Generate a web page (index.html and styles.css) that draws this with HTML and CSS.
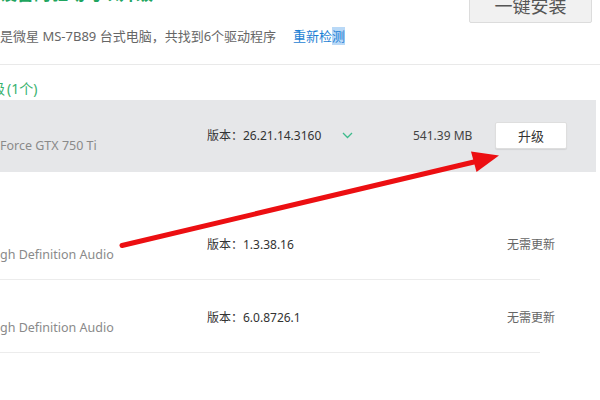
FILE: index.html
```html
<!DOCTYPE html>
<html lang="zh-CN">
<head>
<meta charset="utf-8">
<title>驱动管理</title>
<link rel="stylesheet" href="styles.css">
</head>
<body>
<div class="page">
  <header class="top">
    <div class="summary">
      <h1 class="headline"><span class="cut">检测到有3个</span>设备的驱动可以升级</h1>
      <p class="meta"><span class="cut">您的电脑</span>是微星 MS-7B89 台式电脑，共找到6个驱动程序<a class="recheck" href="#">重新检<span class="picked">测</span></a></p>
    </div>
    <button class="install-all" type="button">一键安装</button>
  </header>

  <section class="group">
    <h2 class="group-title"><span class="cut tail">可升级</span>(1个)</h2>
    <div class="row upgradable">
      <div class="name"><span class="cut">NVIDIA Ge</span>Force GTX 750 Ti</div>
      <div class="version">版本：26.21.14.3160</div>
      <div class="more">
        <svg width="11" height="7" viewBox="0 0 11 7"><polyline points="1,1 5.5,5.5 10,1" fill="none" stroke="#3dbb8c" stroke-width="1.3"/></svg>
      </div>
      <div class="size">541.39 MB</div>
      <div class="action"><button class="upgrade" type="button">升级</button></div>
    </div>
  </section>

  <section class="group latest">
    <div class="row plain">
      <div class="name"><span class="cut">Realtek Hi</span>gh Definition Audio</div>
      <div class="version">版本：1.3.38.16</div>
      <div class="more"></div>
      <div class="size"></div>
      <div class="action status">无需更新</div>
    </div>
    <div class="row plain">
      <div class="name"><span class="cut">NVIDIA Hi</span>gh Definition Audio</div>
      <div class="version">版本：6.0.8726.1</div>
      <div class="more"></div>
      <div class="size"></div>
      <div class="action status">无需更新</div>
    </div>
  </section>

  <!-- red pointer annotation drawn over the list -->
  <svg class="pointer" width="600" height="400" viewBox="0 0 600 400">
    <line x1="122" y1="245.5" x2="476" y2="161.5" stroke="#ec0f12" stroke-width="5" stroke-linecap="round"/>
    <polygon points="499,155.5 471,151.5 476.5,172" fill="#ec0f12"/>
  </svg>
</div>
</body>
</html>
```

FILE: styles.css
```css
html, body {
  margin: 0;
  padding: 0;
  background: #ffffff;
}

body {
  font-family: "Noto Sans", "Noto Sans CJK SC", sans-serif;
  color: #333333;
  overflow: hidden;
}

.page {
  position: relative;
  width: 600px;
  height: 400px;
  overflow: hidden;
}

/* text whose beginning runs off the left edge of the window */
.cut {
  display: inline-block;
  width: 0;
  direction: rtl;
  white-space: nowrap;
}

.cut.tail {
  width: 5px;
  margin-right: 2px;
  overflow: hidden;
  vertical-align: bottom;
}

/* ---------- header ---------- */
.top {
  display: flex;
  justify-content: space-between;
  align-items: flex-start;
  border-bottom: 1px solid #e9e9e9;
  height: 64px;
}

.headline {
  margin: -16px 0 0;
  font-size: 17px;
  line-height: 20px;
  font-weight: bold;
  color: #1fa55f;
  white-space: nowrap;
}

.meta {
  margin: 22px 0 0;
  font-size: 13px;
  line-height: 20px;
  color: #666666;
  white-space: nowrap;
}

.recheck {
  margin-left: 17px;
  color: #1d7fd4;
  text-decoration: none;
}

.picked {
  background: #b9d9f7;
}

.install-all {
  margin: -14px 8px 0 0;
  width: 123px;
  height: 37px;
  padding: 0;
  border: 1px solid #dcdcdc;
  border-radius: 2px;
  background: #f1f1f1;
  font-family: inherit;
  font-size: 18px;
  color: #555555;
}

/* ---------- driver groups ---------- */
.group-title {
  margin: 14px 0 0;
  font-size: 14px;
  line-height: 20px;
  font-weight: normal;
  color: #38b26e;
  white-space: nowrap;
}

.row {
  display: grid;
  grid-template-columns: 207px 135px 71px 82px 72px;
  align-items: start;
  box-sizing: border-box;
  font-size: 12px;
  line-height: 18px;
  white-space: nowrap;
}

.row.upgradable {
  margin-top: 1px;
  height: 72px;
  padding-top: 22px;
  margin-right: 4px;
  background: #e6e7e9;
}

.row.plain {
  height: 73px;
  padding-top: 25px;
  margin-right: 60px;
  border-bottom: 1px solid #ececec;
}

.group.latest {
  margin-top: 35px;
}

.name {
  color: #8a8a8a;
  margin-top: 15px;
  font-size: 12.5px;
}

.row.plain .name {
  margin-top: 14px;
}

.version,
.size {
  margin-top: 5px;
  color: #333333;
}

.row.plain .version {
  margin-top: 4px;
}

.more {
  padding-top: 10px;
  line-height: 0;
}

.size {
  color: #444444;
}

.upgrade {
  width: 72px;
  height: 27px;
  padding: 0;
  border: 1px solid #dedede;
  border-radius: 2px;
  background: #ffffff;
  box-shadow: 0 1px 1px rgba(0, 0, 0, 0.08);
  font-family: inherit;
  font-size: 13px;
  color: #333333;
}

.status {
  margin-top: 4px;
  text-align: center;
  color: #666666;
}

.pointer {
  position: absolute;
  left: 0;
  top: 0;
  pointer-events: none;
}
```
